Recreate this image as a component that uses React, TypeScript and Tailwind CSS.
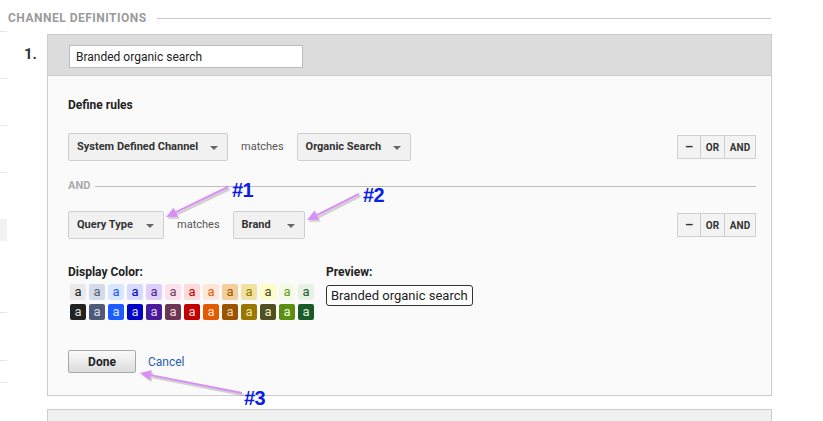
import React from "react";

const lightSwatches = [
  ["#e9e9e9", "#222222"],
  ["#d3dae8", "#56607a"],
  ["#d9e6ff", "#1a55ff"],
  ["#d8dafc", "#0000c8"],
  ["#ddcffa", "#4b1f93"],
  ["#fbe0ee", "#74415b"],
  ["#fddadc", "#cc0000"],
  ["#fde7d8", "#e65c0a"],
  ["#f4cf9b", "#9a5a00"],
  ["#f0e2a0", "#9a7a00"],
  ["#fdfdc9", "#4a4a1f"],
  ["#f5fae7", "#5a9a1a"],
  ["#e8f2e4", "#1b5a2b"],
];

const darkSwatches = [
  ["#222222", "#dddddd"],
  ["#4e5a78", "#d6dbe8"],
  ["#1a5cff", "#dbe6ff"],
  ["#0000c6", "#d4d6fb"],
  ["#4a1a98", "#ddd0f8"],
  ["#6c3551", "#f5dbe8"],
  ["#c00000", "#fdd8d8"],
  ["#e45a00", "#fde3d3"],
  ["#9a5400", "#f4d3a8"],
  ["#9a7800", "#f0e2a8"],
  ["#4f4f20", "#eeeec8"],
  ["#5a9012", "#eef7dc"],
  ["#1c5a28", "#dcefdf"],
];

function Dropdown({ label, width }: { label: string; width: string }) {
  return (
    <div
      className={`${width} h-[28px] flex items-center justify-between pl-[8px] pr-[9px] bg-[#f1f1f1] border border-[#cfcfcf] rounded-[2px] text-[11px] font-bold text-[#333]`}
    >
      <span>{label}</span>
      <span className="w-0 h-0 border-l-[4px] border-r-[4px] border-t-[4px] border-l-transparent border-r-transparent border-t-[#666] mt-[2px]" />
    </div>
  );
}

function LogicButtons() {
  return (
    <div className="ml-auto flex h-[24px] border border-[#cfcfcf] bg-[#f3f3f3] text-[10px] font-bold text-[#333]">
      <div className="w-[23px] flex items-center justify-center border-r border-[#cfcfcf] text-[13px]">
        –
      </div>
      <div className="w-[24px] flex items-center justify-center border-r border-[#cfcfcf]">
        OR
      </div>
      <div className="w-[30px] flex items-center justify-center">AND</div>
    </div>
  );
}

function RuleRow({
  left,
  leftWidth,
  right,
  rightWidth,
}: {
  left: string;
  leftWidth: string;
  right: string;
  rightWidth: string;
}) {
  return (
    <div className="flex items-center h-[28px]">
      <Dropdown label={left} width={leftWidth} />
      <span className="mx-[13px] text-[11px] text-[#555]">matches</span>
      <Dropdown label={right} width={rightWidth} />
      <LogicButtons />
    </div>
  );
}

function Annotations() {
  const arrows = [
    { x1: 228, y1: 187, x2: 166, y2: 217 },
    { x1: 359, y1: 194, x2: 307, y2: 220 },
    { x1: 242, y1: 393, x2: 140, y2: 373 },
  ];
  return (
    <>
      <svg
        className="absolute left-0 top-0 pointer-events-none"
        width="823"
        height="421"
      >
        {arrows.map((a, i) => {
          const ang = Math.atan2(a.y2 - a.y1, a.x2 - a.x1);
          const len = 11;
          const w = 5;
          const bx = a.x2 - len * Math.cos(ang);
          const by = a.y2 - len * Math.sin(ang);
          const p1 = `${bx + w * Math.sin(ang)},${by - w * Math.cos(ang)}`;
          const p2 = `${bx - w * Math.sin(ang)},${by + w * Math.cos(ang)}`;
          return (
            <g key={i}>
              <g transform="translate(1.5,2)" opacity="0.25">
                <line x1={a.x1} y1={a.y1} x2={bx} y2={by} stroke="#555" strokeWidth="2.5" />
                <polygon points={`${a.x2},${a.y2} ${p1} ${p2}`} fill="#555" />
              </g>
              <line x1={a.x1} y1={a.y1} x2={bx} y2={by} stroke="#d98ef7" strokeWidth="2" />
              <polygon points={`${a.x2},${a.y2} ${p1} ${p2}`} fill="#d98ef7" />
            </g>
          );
        })}
      </svg>
      <span className="absolute left-[232px] top-[175px] text-[20px] font-bold text-[#0a1ee6] font-['Liberation_Sans',sans-serif] tracking-[-0.5px]">
        #1
      </span>
      <span className="absolute left-[363px] top-[180px] text-[20px] font-bold text-[#0a1ee6] font-['Liberation_Sans',sans-serif] tracking-[-0.5px]">
        #2
      </span>
      <span className="absolute left-[244px] top-[383px] text-[20px] font-bold text-[#0a1ee6] font-['Liberation_Sans',sans-serif] tracking-[-0.5px]">
        #3
      </span>
    </>
  );
}

export default function App() {
  return (
    <div className="relative w-[823px] h-[421px] overflow-hidden bg-white flex font-['Roboto',sans-serif] text-[#333]">
      {/* side strip */}
      <div className="w-[7px] shrink-0 flex flex-col">
        <div className="h-[32px] border-b border-[#e6e6e6]" />
        <div className="h-[47px] border-b border-[#e6e6e6]" />
        <div className="h-[47px] border-b border-[#e6e6e6]" />
        <div className="h-[47px] border-b border-[#e6e6e6]" />
        <div className="h-[46px]" />
        <div className="h-[22px] bg-[#f2f2f2]" />
        <div className="h-[72px] border-b border-[#e6e6e6]" />
        <div className="h-[48px] border-b border-[#e6e6e6]" />
        <div className="h-[22px] border-b border-[#e6e6e6]" />
      </div>

      <div className="flex-1 flex flex-col pl-[1px] pt-[10px]">
        <div className="flex items-center h-[16px] pr-[52px]">
          <span className="text-[12px] font-bold text-[#9a9a9a] tracking-[0.5px]">
            CHANNEL DEFINITIONS
          </span>
          <div className="flex-1 ml-[10px] border-t border-[#c8c8c8]" />
        </div>

        <div className="flex mt-[8px]">
          <div className="w-[39px] pl-[16px] pt-[9px] text-[15px] font-bold text-[#333]">
            1.
          </div>
          <div className="w-[725px] border border-[#cdcdcd] bg-[#fafafa]">
            <div className="h-[41px] bg-[#dcdcdc] border-b border-[#cdcdcd] pl-[21px] pt-[10px]">
              <div className="w-[234px] h-[23px] bg-white border border-[#bdbdbd] pl-[6px] flex items-center text-[12px] text-[#222]">
                Branded organic search
              </div>
            </div>

            <div className="pl-[20px] pr-[15px] pt-[21px] pb-[22px]">
              <div className="text-[12px] font-bold leading-[16px] text-[#222]">
                Define rules
              </div>

              <div className="mt-[20px]">
                <RuleRow
                  left="System Defined Channel"
                  leftWidth="w-[160px]"
                  right="Organic Search"
                  rightWidth="w-[114px]"
                />
              </div>

              <div className="mt-[18px] h-[14px] flex items-center">
                <span className="text-[11px] font-bold text-[#aaa]">AND</span>
                <div className="flex-1 ml-[5px] border-t border-[#bdbdbd]" />
              </div>

              <div className="mt-[18px]">
                <RuleRow
                  left="Query Type"
                  leftWidth="w-[96px]"
                  right="Brand"
                  rightWidth="w-[72px]"
                />
              </div>

              <div className="mt-[25px] flex">
                <div className="w-[258px]">
                  <div className="text-[12px] font-bold leading-[16px] text-[#222]">
                    Display Color:
                  </div>
                  <div className="mt-[4px] pl-[2px] grid grid-cols-[repeat(13,16px)] gap-x-[3px] gap-y-[4px]">
                    {[...lightSwatches, ...darkSwatches].map(([bg, fg], i) => (
                      <div
                        key={i}
                        className="w-[16px] h-[16px] rounded-[2px] flex items-center justify-center text-[13px] leading-none pb-[2px]"
                        style={{ backgroundColor: bg, color: fg }}
                      >
                        a
                      </div>
                    ))}
                  </div>
                </div>
                <div>
                  <div className="text-[12px] font-bold leading-[16px] text-[#222]">
                    Preview:
                  </div>
                  <div className="mt-[5px] h-[21px] px-[4px] border border-[#333] rounded-[3px] bg-white flex items-center text-[13px] text-[#222]">
                    Branded organic search
                  </div>
                </div>
              </div>

              <div className="mt-[30px] flex items-center">
                <div className="w-[68px] h-[23px] flex items-center justify-center border border-[#a8a8a8] rounded-[2px] bg-gradient-to-b from-[#fafafa] to-[#dcdcdc] text-[12px] font-bold text-[#222]">
                  Done
                </div>
                <span className="ml-[12px] text-[12px] text-[#2b5fb3]">Cancel</span>
              </div>
            </div>
          </div>
        </div>

        <div className="flex mt-[13px]">
          <div className="w-[39px]" />
          <div className="w-[725px] h-[20px] border border-[#cdcdcd] bg-[#f0f0f0]" />
        </div>
      </div>

      <Annotations />
    </div>
  );
}
